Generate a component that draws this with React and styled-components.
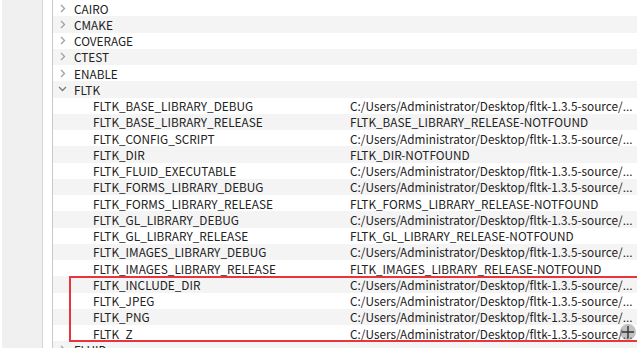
import React from "react";
import styled, { createGlobalStyle } from "styled-components";

const Global = createGlobalStyle`
  html, body { margin: 0; padding: 0; background: #ffffff; overflow: hidden; }
  body { font-family: "Microsoft YaHei", "Noto Sans CJK SC", "Noto Sans", sans-serif; }
`;

const Page = styled.div`
  display: flex;
  width: 637px;
  height: 348px;
  overflow: hidden;
  background: #ffffff;
`;

const Sidebar = styled.div`
  width: 40px;
  margin-left: 2px;
  background: #f0f0f0;
  border-right: 1px solid #d6d6d6;
  flex: none;
`;

const Gutter = styled.div`
  width: 9px;
  flex: none;
  background: #ffffff;
`;

const TreePanel = styled.div`
  position: relative;
  flex: 1;
  border-left: 1px solid #c9c9c9;
  overflow: hidden;
`;

const Rows = styled.div`
  display: flex;
  flex-direction: column;
`;

const Row = styled.div`
  display: grid;
  grid-template-columns: 297px 1fr;
  height: 16.25px;
  align-items: center;
  background: ${(p) => (p.$alt ? "#f4f4f4" : "#ffffff")};
  font-size: 11.8px;
  color: #222222;
  white-space: nowrap;
  line-height: 15px;
`;

const NameCell = styled.div`
  display: flex;
  align-items: center;
  padding-left: ${(p) => (p.$child ? "40px" : p.$open ? "5px" : "7px")};
  overflow: hidden;
`;

const Arrow = styled.span`
  display: inline-flex;
  width: ${(p) => (p.$open ? "16px" : "14px")};
  justify-content: flex-start;
  align-items: center;
  flex: none;
`;

const ValueCell = styled.div`
  overflow: hidden;
  text-overflow: clip;
`;

const Highlight = styled.div`
  position: absolute;
  left: 16px;
  top: 276px;
  right: -10px;
  height: 62px;
  border: 2px solid #e8343c;
  pointer-events: none;
`;

const Cursor = styled.div`
  position: absolute;
  left: 566px;
  top: 322px;
  width: 18px;
  height: 18px;
`;

const Chevron = ({ open }) =>
  open ? (
    <svg width="9" height="6" viewBox="0 0 9 6">
      <path d="M1 1 L4.5 4.5 L8 1" fill="none" stroke="#7a7a7a" strokeWidth="1.3" />
    </svg>
  ) : (
    <svg width="6" height="9" viewBox="0 0 6 9">
      <path d="M1 1 L4.5 4.5 L1 8" fill="none" stroke="#a0a0a0" strokeWidth="1.3" />
    </svg>
  );

const PATH = "C:/Users/Administrator/Desktop/fltk-1.3.5-source/...";

const groups = ["CAIRO", "CMAKE", "COVERAGE", "CTEST", "ENABLE"];
const children = [
  ["FLTK_BASE_LIBRARY_DEBUG", PATH],
  ["FLTK_BASE_LIBRARY_RELEASE", "FLTK_BASE_LIBRARY_RELEASE-NOTFOUND"],
  ["FLTK_CONFIG_SCRIPT", PATH],
  ["FLTK_DIR", "FLTK_DIR-NOTFOUND"],
  ["FLTK_FLUID_EXECUTABLE", PATH],
  ["FLTK_FORMS_LIBRARY_DEBUG", PATH],
  ["FLTK_FORMS_LIBRARY_RELEASE", "FLTK_FORMS_LIBRARY_RELEASE-NOTFOUND"],
  ["FLTK_GL_LIBRARY_DEBUG", PATH],
  ["FLTK_GL_LIBRARY_RELEASE", "FLTK_GL_LIBRARY_RELEASE-NOTFOUND"],
  ["FLTK_IMAGES_LIBRARY_DEBUG", PATH],
  ["FLTK_IMAGES_LIBRARY_RELEASE", "FLTK_IMAGES_LIBRARY_RELEASE-NOTFOUND"],
  ["FLTK_INCLUDE_DIR", PATH],
  ["FLTK_JPEG", PATH],
  ["FLTK_PNG", PATH],
  ["FLTK_Z", PATH],
];

export default function App() {
  let i = 0;
  const items = [];
  groups.forEach((g) => {
    const alt = i++ % 2 === 1;
    items.push(
      <Row key={g} $alt={alt}>
        <NameCell>
          <Arrow><Chevron /></Arrow>
          {g}
        </NameCell>
        <ValueCell />
      </Row>
    );
  });
  items.push(
    <Row key="FLTK" $alt={i++ % 2 === 1}>
      <NameCell $open>
        <Arrow $open><Chevron open /></Arrow>
        FLTK
      </NameCell>
      <ValueCell />
    </Row>
  );
  children.forEach(([n, v]) => {
    items.push(
      <Row key={n} $alt={i++ % 2 === 1}>
        <NameCell $child>{n}</NameCell>
        <ValueCell>{v}</ValueCell>
      </Row>
    );
  });
  items.push(
    <Row key="FLUID" $alt={i++ % 2 === 1}>
      <NameCell>
        <Arrow><Chevron /></Arrow>
        FLUID
      </NameCell>
      <ValueCell />
    </Row>
  );

  return (
    <>
      <Global />
      <Page>
        <Sidebar />
        <Gutter />
        <TreePanel>
          <Rows>{items}</Rows>
          <Highlight />
          <Cursor>
            <svg width="18" height="18" viewBox="0 0 18 18">
              <circle cx="9" cy="9" r="8" fill="rgba(120,120,120,0.45)" />
              <path d="M9 3 V15 M3 9 H15" stroke="#333" strokeWidth="1.4" />
            </svg>
          </Cursor>
        </TreePanel>
      </Page>
    </>
  );
}
